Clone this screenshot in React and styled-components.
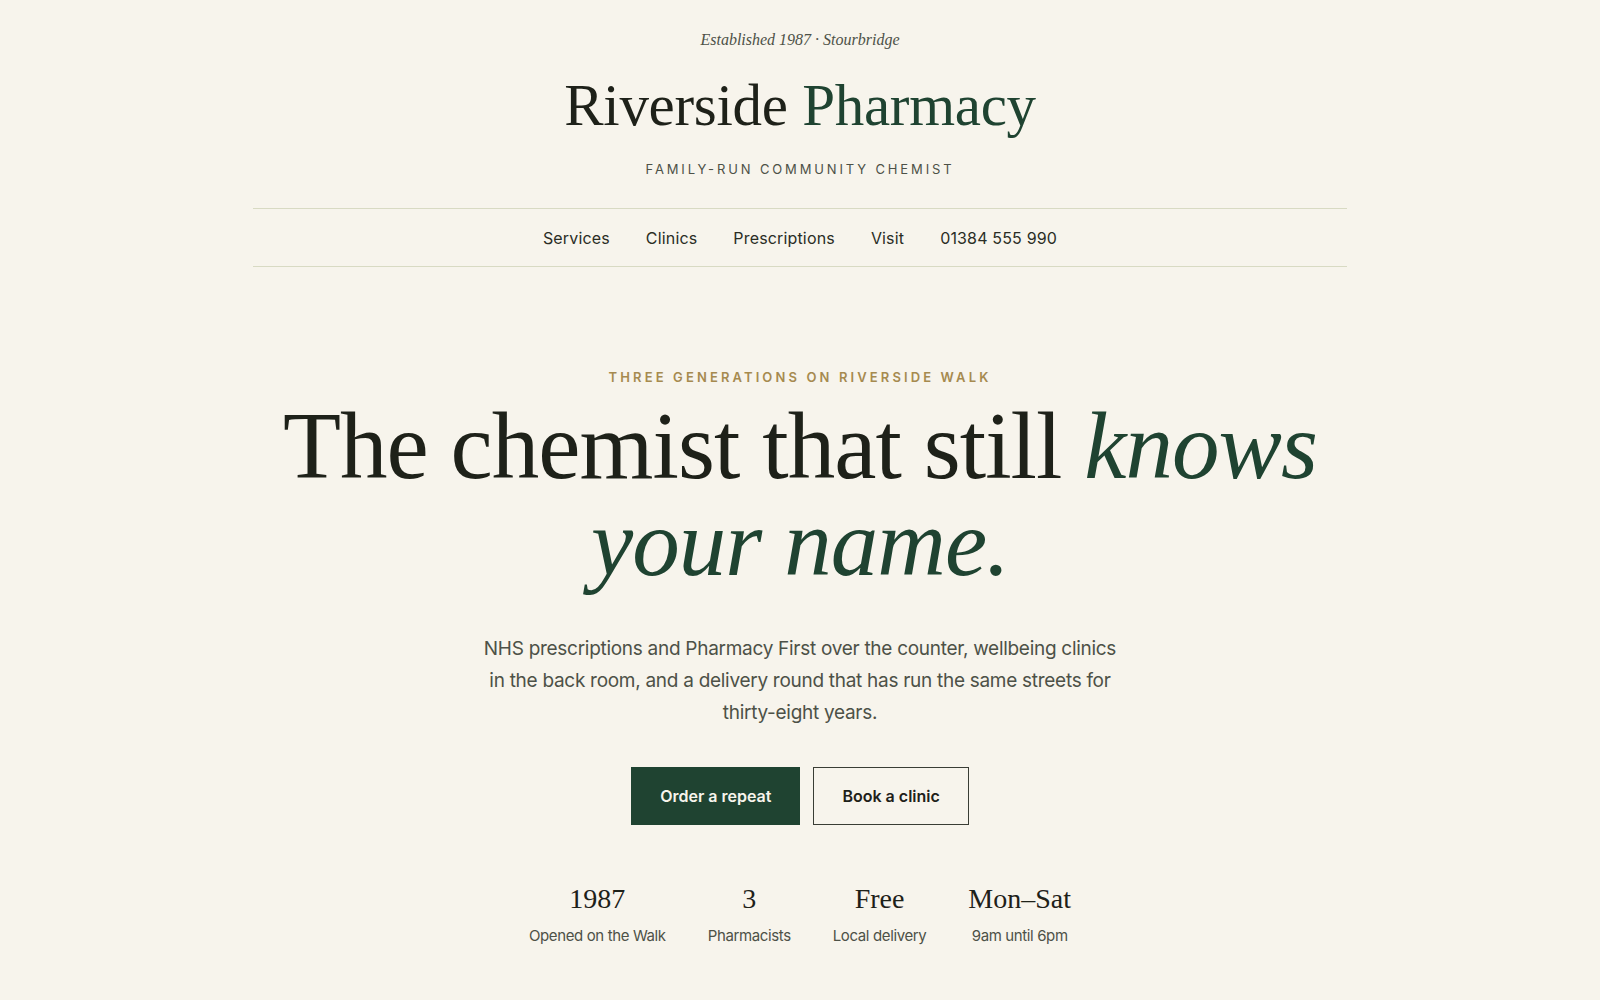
import React from 'react';
import styled, { createGlobalStyle } from 'styled-components';

const GlobalStyle = createGlobalStyle`
  html, body {
    margin: 0;
    padding: 0;
    background: #f7f4ec;
  }
  body {
    font-family: Inter, "Noto Sans", sans-serif;
    color: #1e2119;
  }
`;

const serif = `"Liberation Serif", "DejaVu Serif", serif`;
const sans = `Inter, "Noto Sans", sans-serif`;

const Page = styled.div`
  min-height: 1000px;
  display: flex;
  flex-direction: column;
  align-items: center;
`;

const Masthead = styled.header`
  width: 1094px;
  display: flex;
  flex-direction: column;
  align-items: center;
  padding-top: 30px;
`;

const Established = styled.p`
  margin: 0;
  font-family: ${serif};
  font-style: italic;
  font-size: 16px;
  line-height: 20px;
  color: #4d5147;
`;

const Title = styled.h1`
  margin: 23px 0 0;
  font-family: ${serif};
  font-weight: 400;
  font-size: 59px;
  line-height: 64px;
  letter-spacing: -0.005em;
  color: #1e2119;
`;

const Green = styled.span`
  color: #1f4331;
  font-style: ${({ italic }) => (italic ? 'italic' : 'normal')};
`;

const Tagline = styled.p`
  margin: 23px 0 0;
  font-family: ${sans};
  font-size: 13px;
  line-height: 18px;
  letter-spacing: 0.22em;
  color: #4d5147;
  text-transform: uppercase;
`;

const Nav = styled.nav`
  align-self: stretch;
  margin-top: 30px;
  height: 57px;
  border-top: 1px solid #d8dac3;
  border-bottom: 1px solid #d8dac3;
  display: flex;
  align-items: center;
  justify-content: center;
  gap: 36px;
`;

const NavLink = styled.a`
  font-family: ${sans};
  font-size: 16px;
  letter-spacing: 0.01em;
  color: #2a2d25;
  text-decoration: none;
  cursor: pointer;
`;

const Hero = styled.section`
  display: flex;
  flex-direction: column;
  align-items: center;
  text-align: center;
  padding-top: 101px;
`;

const Eyebrow = styled.p`
  margin: 0;
  font-family: ${sans};
  font-size: 13px;
  font-weight: 600;
  line-height: 18px;
  letter-spacing: 0.24em;
  color: #a68a4f;
  text-transform: uppercase;
`;

const Headline = styled.h2`
  margin: 12px 0 0;
  font-family: ${serif};
  font-weight: 400;
  font-size: 95px;
  line-height: 97px;
  letter-spacing: -0.01em;
  color: #1e2119;
`;

const Lede = styled.p`
  margin: 41px 0 0;
  max-width: 650px;
  font-family: ${sans};
  font-size: 19px;
  line-height: 32px;
  letter-spacing: -0.015em;
  color: #4d5147;
`;

const Actions = styled.div`
  margin-top: 38px;
  display: flex;
  gap: 13px;
`;

const Button = styled.button`
  height: 58px;
  padding: 0 28px;
  font-family: ${sans};
  font-size: 16px;
  font-weight: 600;
  cursor: pointer;
  border: 1px solid ${({ primary }) => (primary ? '#1f4331' : '#3a3d35')};
  background: ${({ primary }) => (primary ? '#1f4331' : 'transparent')};
  color: ${({ primary }) => (primary ? '#f7f4ec' : '#1e2119')};
`;

const Stats = styled.div`
  margin-top: 57px;
  display: flex;
  gap: 42px;
`;

const Stat = styled.div`
  display: flex;
  flex-direction: column;
  align-items: center;
  gap: 10px;
`;

const StatValue = styled.span`
  font-family: ${serif};
  font-size: 28px;
  line-height: 34px;
  color: #1e2119;
`;

const StatLabel = styled.span`
  font-family: ${sans};
  font-size: 15px;
  line-height: 20px;
  letter-spacing: -0.025em;
  color: #4d5147;
`;

const links = ['Services', 'Clinics', 'Prescriptions', 'Visit', '01384 555 990'];

const stats = [
  { value: '1987', label: 'Opened on the Walk' },
  { value: '3', label: 'Pharmacists' },
  { value: 'Free', label: 'Local delivery' },
  { value: 'Mon–Sat', label: '9am until 6pm' },
];

const App = () => (
  <>
    <GlobalStyle />
    <Page>
      <Masthead>
        <Established>Established 1987 · Stourbridge</Established>
        <Title>
          Riverside <Green>Pharmacy</Green>
        </Title>
        <Tagline>Family-run community chemist</Tagline>
        <Nav>
          {links.map((link) => (
            <NavLink key={link}>{link}</NavLink>
          ))}
        </Nav>
      </Masthead>

      <Hero>
        <Eyebrow>Three generations on Riverside Walk</Eyebrow>
        <Headline>
          The chemist that still <Green italic>knows</Green>
          <br />
          <Green italic>your name.</Green>
        </Headline>
        <Lede>
          NHS prescriptions and Pharmacy First over the counter, wellbeing clinics in the back
          room, and a delivery round that has run the same streets for thirty-eight years.
        </Lede>
        <Actions>
          <Button primary>Order a repeat</Button>
          <Button>Book a clinic</Button>
        </Actions>
        <Stats>
          {stats.map((s) => (
            <Stat key={s.value}>
              <StatValue>{s.value}</StatValue>
              <StatLabel>{s.label}</StatLabel>
            </Stat>
          ))}
        </Stats>
      </Hero>
    </Page>
  </>
);

export default App;
